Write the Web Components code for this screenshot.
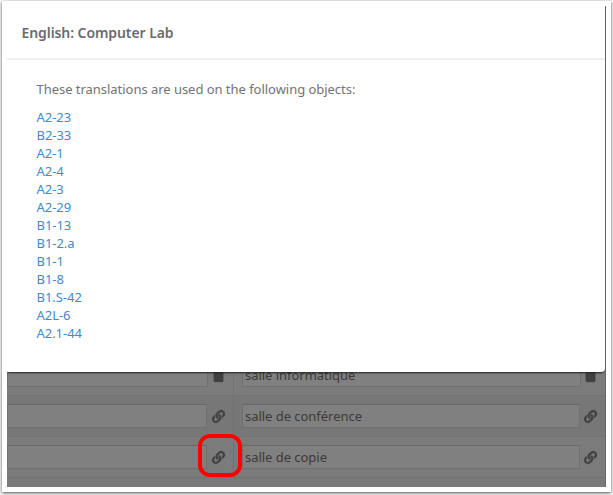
<!DOCTYPE html>
<html lang="en"><head><meta charset="utf-8"><title>Translations</title>
<style>html,body{margin:0;height:100%;overflow:hidden;background:#fff}body{font:13px/18px "Noto Sans",sans-serif;letter-spacing:-.035px}</style></head>
<body>
<app-frame>
  <translation-grid>
    <translation-row text="salle informatique" icon="trash"></translation-row>
    <translation-row text="salle de conférence" icon="link" alt></translation-row>
    <translation-row text="salle de copie" icon="link"></translation-row>
  </translation-grid>
  <usage-dialog slot="dialog" heading="English: Computer Lab">
    <span slot="intro">These translations are used on the following objects:</span>
    <object-link>A2-23</object-link><object-link>B2-33</object-link><object-link>A2-1</object-link><object-link>A2-4</object-link><object-link>A2-3</object-link><object-link>A2-29</object-link><object-link>B1-13</object-link><object-link>B1-2.a</object-link><object-link>B1-1</object-link><object-link>B1-8</object-link><object-link>B1.S-42</object-link><object-link>A2L-6</object-link><object-link>A2.1-44</object-link>
  </usage-dialog>
  <focus-ring slot="mark"></focus-ring>
</app-frame>
<script>
class Base extends HTMLElement{
  constructor(){super();this.attachShadow({mode:'open'})}
  connectedCallback(){this.shadowRoot.innerHTML=this.view()}
}
customElements.define('app-frame',class extends Base{view(){return `<style>
:host{display:block;box-sizing:border-box;position:relative;width:613px;height:495px;background:#fafafa;padding:1px 2px 3px 2px}
.sheet{box-sizing:border-box;height:491px;padding:5px 5px;background:#fff;box-shadow:0 1px 3px rgba(0,0,0,.7)}
.screen{height:481px;width:599px;overflow:hidden;position:relative;background:#797979}
</style><div class="sheet"><div class="screen"><slot></slot><slot name="dialog"></slot></div></div><slot name="mark"></slot>`}});
customElements.define('translation-grid',class extends Base{view(){return `<style>
:host{display:flex;flex-direction:column;justify-content:flex-end;box-sizing:border-box;height:100%;padding-bottom:9px;background:#797979;border-right:1px solid #666}
</style><slot></slot>`}});
customElements.define('ui-icon',class extends Base{view(){
const link='M326.612 185.391c59.747 59.809 58.927 155.698.36 214.59-.11.12-.24.25-.36.37l-67.2 67.2c-59.27 59.27-155.699 59.262-214.96 0-59.27-59.26-59.27-155.7 0-214.96l37.106-37.106c9.84-9.84 26.786-3.3 27.294 10.606.648 17.722 3.826 35.527 9.69 52.721 1.986 5.822.567 12.262-3.783 16.612l-13.087 13.087c-28.026 28.026-28.905 73.66-1.155 101.96 28.024 28.579 74.086 28.749 102.325.51l67.2-67.19c28.191-28.191 28.073-73.757 0-101.83-3.701-3.694-7.429-6.564-10.341-8.569a16.037 16.037 0 0 1-6.947-12.606c-.396-10.567 3.348-21.456 11.698-29.806l21.054-21.055c5.521-5.521 14.182-6.199 20.584-1.731a152.482 152.482 0 0 1 20.522 17.197zM467.547 44.449c-59.261-59.262-155.69-59.27-214.96 0l-67.2 67.2c-.12.12-.25.25-.36.37-58.566 58.892-59.387 154.781.36 214.59a152.454 152.454 0 0 0 20.521 17.196c6.402 4.468 15.064 3.789 20.584-1.731l21.054-21.055c8.35-8.35 12.094-19.239 11.698-29.806a16.037 16.037 0 0 0-6.947-12.606c-2.912-2.005-6.64-4.875-10.341-8.569-28.073-28.073-28.191-73.639 0-101.83l67.2-67.19c28.239-28.239 74.3-28.069 102.325.51 27.75 28.3 26.872 73.934-1.155 101.96l-13.087 13.087c-4.35 4.35-5.769 10.79-3.783 16.612 5.864 17.194 9.042 34.999 9.69 52.721.509 13.906 17.454 20.446 27.294 10.606l37.106-37.106c59.271-59.259 59.271-155.699.001-214.959z';
const trash='M70 144h372v320q0 48-48 48H118q-48 0-48-48zM40 48h130l20-48h132l20 48h130v60H40z';
return `<style>:host{display:block;width:13px;height:13px;color:#414141}svg{display:block;overflow:visible}path{stroke:currentColor;stroke-width:10}</style><svg width="13" height="13" viewBox="0 0 512 512"><path fill="currentColor" d="${this.getAttribute('name')==='trash'?trash:link}"/></svg>`}});
customElements.define('translation-row',class extends Base{view(){const i=this.getAttribute('icon');return `<style>
:host{display:grid;grid-template-columns:226px 1fr;height:41px;box-sizing:border-box;border-bottom:1px solid #727272;background:#7b7b7b;flex:none}
:host([alt]){background:#777}
.cell{display:flex;align-items:center;gap:5px;box-sizing:border-box;padding-right:8px;min-width:0}
.cell+.cell{border-left:1px solid #727272;padding-left:8px;padding-right:8px;gap:4px}
.field{box-sizing:border-box;flex:1;height:24px;border:1px solid #707070;border-top-color:#686868;background:#808080;color:#3b3b3b;padding:2px 2px;line-height:19px;white-space:nowrap}
.cell:first-child .field{border-left:0}
:host([icon=trash]) .cell{gap:4px}
:host([icon=trash]) .cell+.cell{gap:3px}
</style><div class="cell"><div class="field"></div><ui-icon name="${i}"></ui-icon></div><div class="cell"><div class="field">${this.getAttribute('text')}</div><ui-icon name="${i}"></ui-icon></div>`}});
customElements.define('usage-dialog',class extends Base{view(){return `<style>
:host{position:absolute;left:0;top:0;width:598px;height:366px;box-sizing:border-box;background:#fff;border-radius:0 0 4px 1px;box-shadow:0 2px 2px -1px rgba(0,0,0,.75);color:#737373}
header{box-sizing:border-box;height:54px;border-bottom:2px solid #efefef;padding:17px 14.5px 0;font-weight:600;font-size:14px;letter-spacing:-.08px;line-height:20px;color:#6b6b6b}
main{padding:20px 29.5px 0}.intro{margin-bottom:10px}
</style><header>${this.getAttribute('heading')}</header><main><div class="intro"><slot name="intro"></slot></div><slot></slot></main>`}});
customElements.define('object-link',class extends Base{view(){return `<style>:host{display:block;height:18px;color:#428bca}</style><slot></slot>`}});
customElements.define('focus-ring',class extends Base{view(){return `<style>:host{position:absolute;left:198px;top:434px;width:44px;height:43px;box-sizing:border-box;border:4px solid #f00;border-radius:12px}</style>`}});
</script></body></html>
